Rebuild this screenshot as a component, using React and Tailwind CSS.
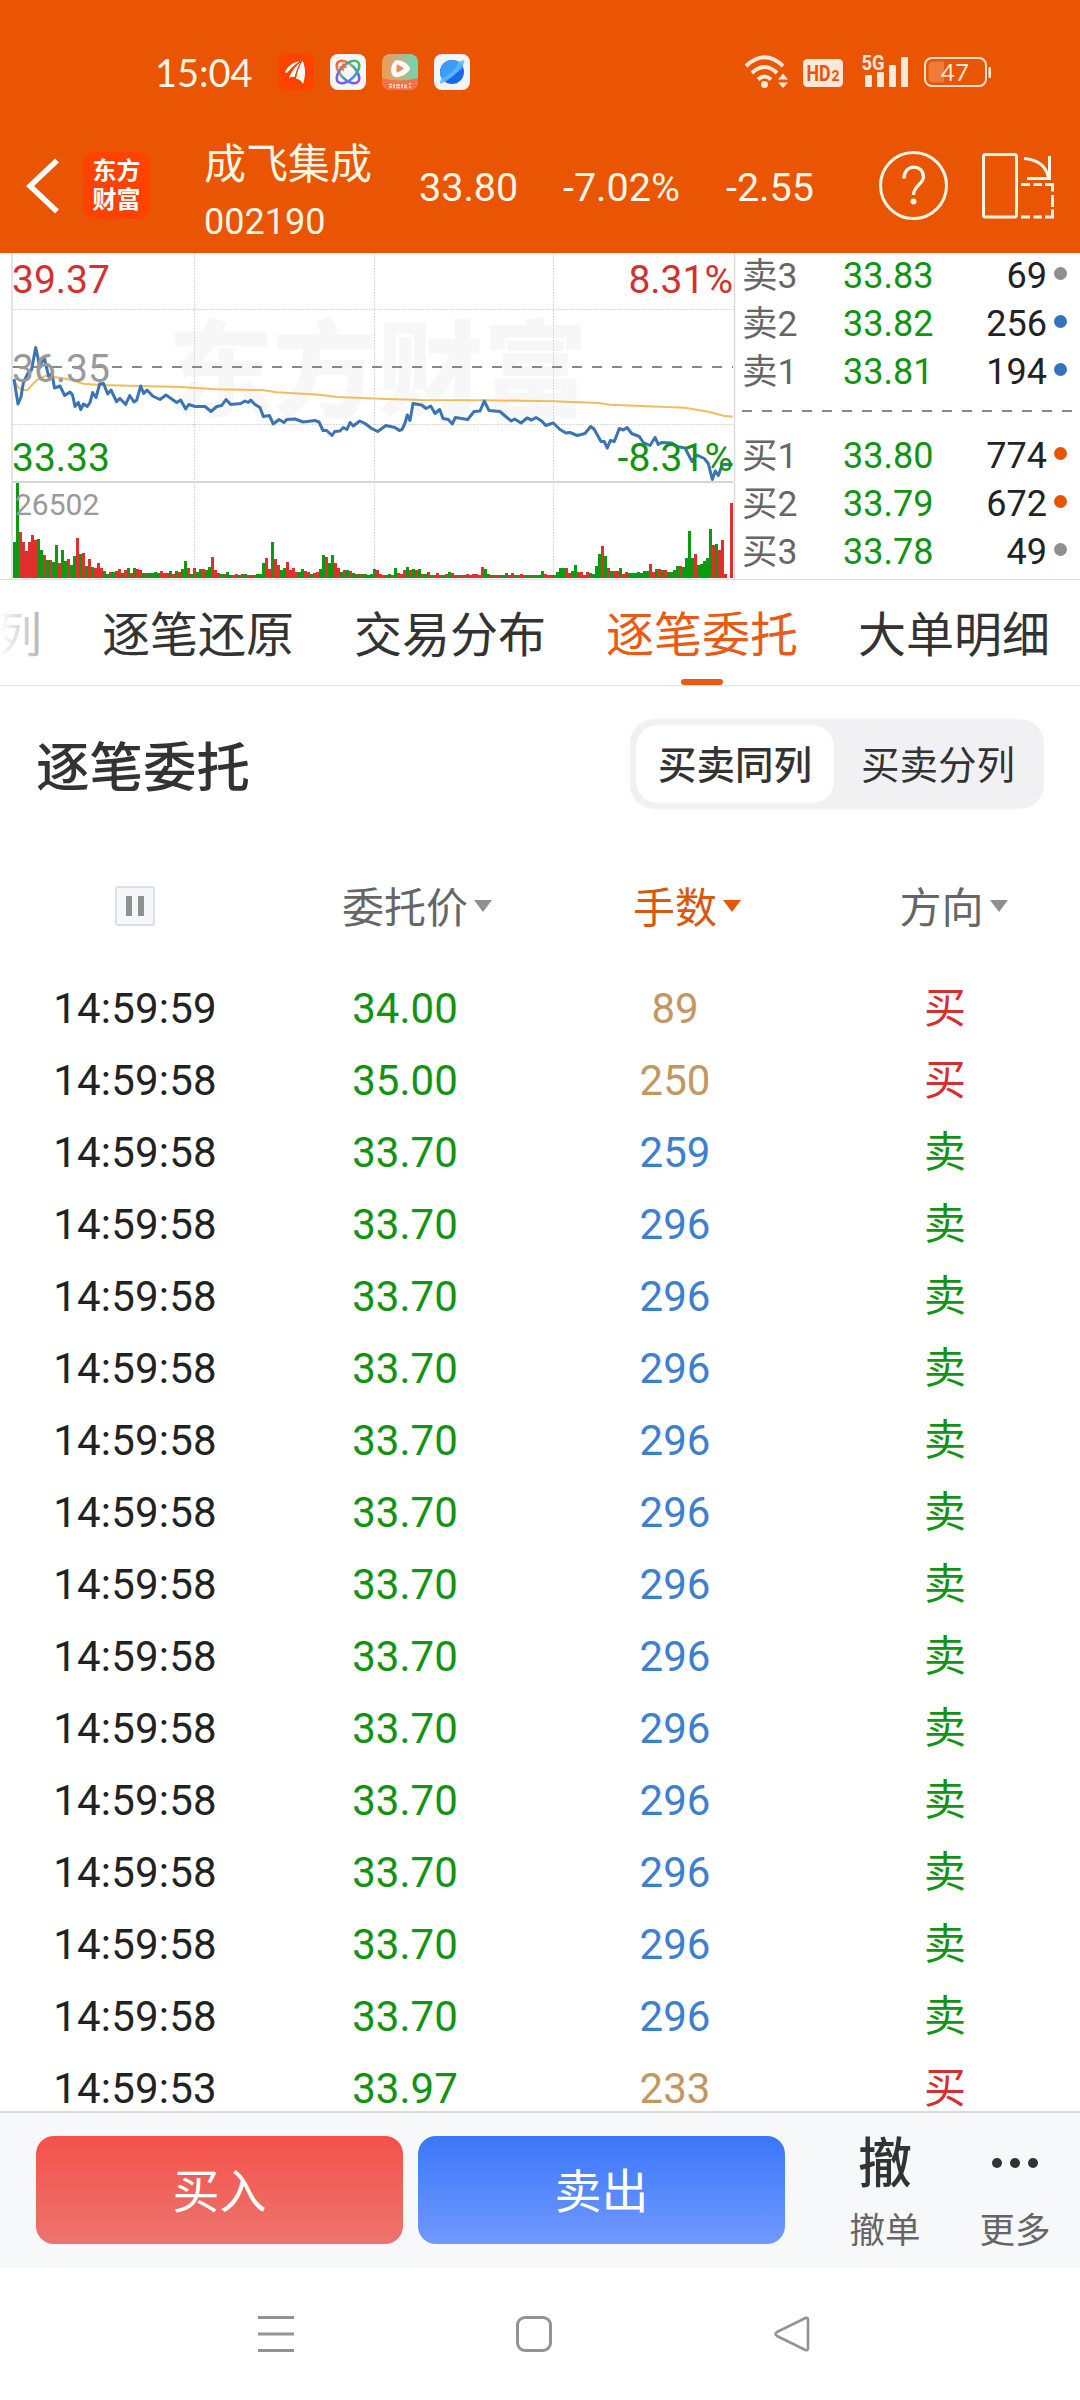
import React from 'react';

const PRICE_LINE =
  '14,379 18,404 21,397 23.3,383 28,373 31.5,370 35.7,347.5 39.5,365 44.5,358.5 48.5,376 52,374 54.5,388 60,386 64.7,395.5 70,392 72.5,395 75,406.5 78.3,402.5 80.7,409.5 83.5,404 87.3,406.5 90,402.5 92.7,392.5 96,397.5 99.7,384 103.5,383.5 107.7,394 111,390 116.5,401.5 120,398.5 125.7,404.5 129.7,395.5 134,402 136.7,400 140.7,386 143.7,393.5 147,390 152.7,396 160,399.5 166,395 171.7,399 176.7,402.5 180.7,400 185.7,409 188.7,404.5 195,406.5 205,406.5 211,411.5 216.7,406.5 221.7,405.5 226,399.5 230.7,404.5 240.7,403.5 245,401 248.3,402.5 250.7,400 255,404.5 260,407.5 263.3,416.5 269.3,415.5 273.3,424 279,419.5 284,422.5 286.7,419.5 295,419 303.3,422 315,420.5 319,422 323,430.5 326.7,430.5 332,435.5 334.7,431.5 340,431 343.3,427.5 347,429.5 350,422.5 353.3,426 359.7,421 365,423.5 371.7,428.5 377.7,431.5 386,425.5 395,427.5 399.3,430.5 402,429.5 404.7,424 407.3,415 410,420.5 413,403.5 421.7,405 426,408.5 430.7,406 435,413.5 439.7,409.5 443,418.5 448.3,419.5 452.3,424 455.3,417.5 467.7,419.5 474,411.5 480,411 484.3,401 489,410.5 500,411.5 505.7,416.5 511.3,421 514.7,419 521,423 527,418 531.7,420 536,417.5 541.7,421 545.7,425.5 553.3,423 560,429.5 566,433 570,432.5 577.3,435.5 585,433.5 590.7,426.5 594,429 597.7,435.5 601,441.5 604.3,441.5 607.3,448 610.3,440.5 614.3,441.5 619.3,428.5 623.3,430 627,427.5 631.7,433.5 639.3,436.5 643.3,442.5 650,445.5 655,437.5 658.3,444.5 661.7,442.5 671.7,443 676.7,446.5 685,448 692,461.5 696.7,455 704.3,458.5 708.3,463.5 712.3,479.5 715.3,471 718.3,475.5 722.3,464.5 732.7,464.5';

const AVERAGE_LINE =
  '14,380 18,387 21.7,390 27.3,390 36.7,380 45,376 60,377.7 71.7,380 83.3,383.7 100,385 140,386 180,387 216.7,389.3 261.7,390 276.7,392.3 320,394.7 336.7,397 380,398.7 420,400 486.7,400.3 553.3,401.3 598.3,403 610,404.7 685,407.7 710,412 723.3,415.7 732.7,416.7';

// One entry per minute: direction (r = up, g = down) and bar height
const VOLUMES = (
  'g36 g95 r46 r36 r27 r36 r43 r38 g39 g28 r23 g18 r18 g16 g33 r15 g28 g17 r19 g13 g22 r40 g24 r25 g12 r19 g11 r10 r15 r10 ' +
  'g7 g4 r6 g6 r7 r9 g5 r8 g10 r5 g10 r9 r8 g5 r5 g5 g5 g6 g5 r7 r5 r5 g7 r4 g7 r6 g9 g17 r10 g4 ' +
  'r10 g6 g9 r9 g8 g11 r21 r8 r5 g4 r4 g6 g3 r3 r4 g3 r4 g4 r3 r3 g3 g4 g4 g15 r20 r9 g36 r19 r13 g8 ' +
  'g10 r16 r8 r10 r6 g6 g9 r7 r6 g4 r5 r6 g9 g23 r21 g15 g23 r15 r10 g6 r8 g8 r7 g5 r4 g4 r4 g4 g3 ' +
  'g4 g9 r8 r4 r3 g3 g4 r3 g10 r5 r4 r8 g11 r8 g9 r8 g9 r4 g4 r6 g3 r3 r5 r3 g3 r4 g6 r5 r3 g3 ' +
  'r3 g3 r4 r3 r4 r4 r3 r11 g9 g4 r3 g3 r3 r3 g3 g5 r3 r5 g3 r3 r4 r3 g3 r3 g3 g3 g3 g7 r4 r3 ' +
  'r3 g3 g6 g10 g10 r10 r5 g7 g13 r6 r6 r3 r6 g5 g4 g12 g24 r32 g22 r10 g7 r7 r7 g10 r4 r6 g5 g5 g5 g6 ' +
  'g5 g7 g7 r14 r6 g9 r9 g8 r8 g6 g6 g8 g12 r12 g11 g20 g47 g20 r24 g13 g14 g17 g20 g49 r33 g34 r28 r38 r4 r0 r75'
).split(' ');

const ASKS = [
  { label: '卖3', price: '33.83', volume: '69', dot: 'bg-[#8e8e93]' },
  { label: '卖2', price: '33.82', volume: '256', dot: 'bg-[#3273c0]' },
  { label: '卖1', price: '33.81', volume: '194', dot: 'bg-[#3273c0]' },
];

const BIDS = [
  { label: '买1', price: '33.80', volume: '774', dot: 'bg-[#ea5504]' },
  { label: '买2', price: '33.79', volume: '672', dot: 'bg-[#ea5504]' },
  { label: '买3', price: '33.78', volume: '49', dot: 'bg-[#8e8e93]' },
];

const TABS = ['逐笔还原', '交易分布', '逐笔委托', '大单明细'];

const ORDERS = [
  { time: '14:59:59', price: '34.00', lots: 89, side: '买' },
  { time: '14:59:58', price: '35.00', lots: 250, side: '买' },
  { time: '14:59:58', price: '33.70', lots: 259, side: '卖' },
  ...Array.from({ length: 12 }, () => ({
    time: '14:59:58',
    price: '33.70',
    lots: 296,
    side: '卖',
  })),
  { time: '14:59:53', price: '33.97', lots: 233, side: '买' },
];

function AppIcons() {
  return (
    <div className="flex gap-4">
      <svg className="h-9 w-9" viewBox="0 0 36 36">
        <rect width="36" height="36" rx="8" fill="#ff4200" />
        <g fill="#fff">
          <path d="M7 18.500C9 12 15 8.500 22 7C17 11 12.500 14 9.500 18.500Z" />
          <path d="M11 24C13 18 18 12 23 7.500C20.500 13 18.500 18 16.500 23C14.500 22.500 13 23 11 24Z" />
          <path d="M18 24.500C19 18 21.500 12 24.500 6.500C27.500 13 28 22 25 30C23.500 27 21 25 18 24.500Z" />
        </g>
        <path d="M23.500 7C20 13 18 18 17.300 25M22.500 7.500C16 12 13 15 10.500 20" stroke="#ff4200" strokeWidth="1" fill="none" />
      </svg>
      <svg className="h-9 w-9" viewBox="0 0 36 36">
        <defs>
          <linearGradient id="knot" x1="0" y1="0" x2="1" y2="0">
            <stop offset="0" stopColor="#f2603c" />
            <stop offset="0.3" stopColor="#e8a23a" />
            <stop offset="0.5" stopColor="#35b58a" />
            <stop offset="0.75" stopColor="#3a7bf0" />
            <stop offset="1" stopColor="#a24be0" />
          </linearGradient>
          <linearGradient id="knotB" x1="0" y1="0" x2="1" y2="0">
            <stop offset="0" stopColor="#8b55e8" />
            <stop offset="0.45" stopColor="#4a8cf0" />
            <stop offset="1" stopColor="#48c04c" />
          </linearGradient>
        </defs>
        <rect width="36" height="36" rx="8" fill="#f6f5f8" />
        <g fill="none" strokeWidth="2.600">
          <ellipse cx="18" cy="18" rx="14" ry="7.500" transform="rotate(45 18 18)" stroke="url(#knot)" />
          <ellipse cx="18" cy="18" rx="14" ry="7.500" transform="rotate(-45 18 18)" stroke="url(#knotB)" />
        </g>
        <path d="M13 8l1.300 3.700L18 13l-3.700 1.300L13 18l-1.300-3.700L8 13l3.700-1.300z" fill="#f0703c" />
      </svg>
      <svg className="h-9 w-9" viewBox="0 0 36 36">
        <defs>
          <linearGradient id="video" x1="0" y1="0.400" x2="1" y2="0.300">
            <stop offset="0" stopColor="#f09a58" />
            <stop offset="0.55" stopColor="#b8b487" />
            <stop offset="1" stopColor="#62dcb8" />
          </linearGradient>
          <clipPath id="videoClip">
            <rect width="36" height="36" rx="8" />
          </clipPath>
        </defs>
        <g clipPath="url(#videoClip)">
          <rect width="36" height="36" fill="url(#video)" />
          <path d="M0 24Q18 29 36 24V36H0Z" fill="#f4714a" />
        </g>
        <path d="M12 8C15 3 28 10 28 14.500C28 19 15 26 11 22C8 18 9 11 12 8Z" fill="#fff" />
        <path d="M15.500 11.500L20.500 14.500L15.500 17.500Z" fill="#f08a50" stroke="#f08a50" strokeWidth="2" strokeLinejoin="round" />
        <path d="M7 30.500h3M7 33h3M12 30v4M14 31h4M14 33.500h4M20 30v4M22 31.500h3M22 33.500h3M27 30.500l2-1.500M27 33h2" stroke="#ffe3cf" strokeWidth="1.500" />
      </svg>
      <svg className="h-9 w-9" viewBox="0 0 36 36">
        <rect width="36" height="36" rx="8" fill="#f4f4f8" />
        <circle cx="18" cy="18" r="12" fill="#1769ef" />
        <path d="M6 17C7 10 12 6 18 6C24 6 27.500 8 29 13C25 18 16 25 9.500 26.500C7 24 6 20.500 6 17Z" fill="#3c9cf8" />
        <path d="M25 8C29 5.500 31 6 30.200 8.500C28 15 14 27.500 7.500 29.500C5 30.200 5.500 27 8.500 23.500C15 22 22 15 25 8Z" fill="#5db7fb" opacity="0.85" />
      </svg>
    </div>
  );
}

function StatusIcons() {
  return (
    <svg className="h-10 w-[252px]" viewBox="742 52 252 40">
      <g fill="none" stroke="#ffe8d8" strokeWidth="4">
        <path d="M746 66Q764.500 48.500 783 66" />
        <path d="M752 73Q764.500 61 777 73" />
        <path d="M758 79.500Q764.500 73.500 771 79.500" />
      </g>
      <circle cx="764.500" cy="84.500" r="3.500" fill="#ffe8d8" />
      <path d="M783 73.500l5 6h-10zM783 88l5-5.500h-10z" fill="#ffe8d8" />
      <rect x="803" y="59" width="40" height="28" rx="4.500" fill="#ffe8d8" />
      <text x="806.500" y="81" fontSize="21.500" textLength="24" lengthAdjust="spacingAndGlyphs" className="font-bold" fill="#e95503">HD</text>
      <text x="831.500" y="81" fontSize="14" className="font-bold" fill="#e95503">2</text>
      <text x="861.500" y="70" fontSize="20" textLength="23" lengthAdjust="spacingAndGlyphs" className="font-bold" fill="#ffe8d8">5G</text>
      <g fill="#ffe8d8">
        <rect x="865" y="75" width="7" height="12" rx="1" />
        <rect x="877" y="72" width="7" height="15" rx="1" />
        <rect x="889" y="65" width="7" height="22" rx="1" />
        <rect x="901" y="57" width="7" height="30" rx="1" />
        <rect x="988.500" y="67" width="2.500" height="11" rx="1" />
      </g>
      <rect x="925" y="58" width="61" height="28" rx="7" fill="none" stroke="#ffe0cb" strokeWidth="2" />
      <path d="M933 61.500h11v21h-11a4.500 4.500 0 0 1-4.500-4.500v-12a4.500 4.500 0 0 1 4.500-4.500z" fill="#ef7a3a" />
      <text x="941" y="81" fontSize="24" fill="#ffe8d8" className="font-['Lato']">47</text>
    </svg>
  );
}

function StatusBar() {
  return (
    <div className="flex h-[104px] items-center justify-between pt-10 pr-[86px] pb-0 pl-[155px]">
      <div className="-mt-10 flex items-center pt-10">
        <span className="w-[123px] font-['Lato'] text-[38px] leading-[64px] text-[#fff6ea]">15:04</span>
        <AppIcons />
      </div>
      <StatusIcons />
    </div>
  );
}

function StockHeader() {
  return (
    <header className="flex h-[149px] items-center pt-[14px] pl-6 text-[39.500px] text-[#fff6e6]">
      <svg className="h-16 w-9 shrink-0" viewBox="0 0 36 64">
        <path d="M33 6.500L6 32L33 57.500" fill="none" stroke="#fff" strokeWidth="5.500" />
      </svg>
      <div className="ml-[23px] flex h-[67px] w-[67px] shrink-0 flex-col items-center justify-center rounded-xl bg-[#ff4200] text-2xl leading-[29px] font-bold text-white">
        <span>东方</span>
        <span>财富</span>
      </div>
      <div className="ml-[54px] w-[215px] shrink-0 pt-[15px] leading-[56px]">
        <h1 className="text-[42px]">成飞集成</h1>
        <p className="pt-px text-[36px]">002190</p>
      </div>
      <span className="w-[144px] shrink-0 pt-1">33.80</span>
      <span className="w-[163px] shrink-0 pt-1">-7.02%</span>
      <span className="w-[152px] shrink-0 pt-1">-2.55</span>
      <svg className="h-[71px] w-[71px] shrink-0" viewBox="0 0 71 71">
        <circle cx="35.500" cy="35.500" r="33" fill="none" stroke="#fff6e6" strokeWidth="3" />
        <path d="M26 28.500C26 13 45.500 14 45.500 27C45.500 34 35.500 35.500 35.500 45" fill="none" stroke="#fff6e6" strokeWidth="3.300" />
        <circle cx="35.500" cy="51.500" r="3" fill="#fff6e6" />
      </svg>
      <svg className="ml-[31px] h-[70px] w-[76px] shrink-0" viewBox="980 150 76 70" fill="none" stroke="#fff6e6" strokeWidth="3">
        <rect x="983.500" y="153.500" width="33" height="62.500" rx="2" />
        <path d="M1024 157.500Q1045 159 1048.500 177" />
        <path d="M1049.500 155v22.500h-22.500" />
        <path d="M1021 183.500h9M1033.500 183.500h8.500M1045 183.500h7.500v7M1052.500 194v12M1052.500 208.500v7.500h-7.500M1042 216h-8.500M1030 216h-9" />
      </svg>
    </header>
  );
}

function MinuteChart() {
  return (
    <svg className="h-[327px] w-[738px] shrink-0" viewBox="0 253 738 327">
      <text x="168" y="408" fontSize="105" className="font-black" fill="#f7f7f7">东方财富</text>
      <g stroke="#cfcfcf" strokeDasharray="1.500 1.500">
        <path d="M194.500 253V578M374.500 253V578M553.500 253V578" />
        <path d="M12 309.500H733M12 424.500H733" />
      </g>
      <path d="M12 367H733" stroke="#888" strokeWidth="2" strokeDasharray="10 10" />
      <path d="M12 482H733" stroke="#d6d6d6" strokeWidth="2" />
      <path d="M12 253V579M734.500 253V579" stroke="#dcdcdc" strokeWidth="1.500" />
      <polyline points={AVERAGE_LINE} fill="none" stroke="#f0bd5c" strokeWidth="2" />
      <polyline points={PRICE_LINE} fill="none" stroke="#3a74b5" strokeWidth="3" strokeLinejoin="round" />
      <g shapeRendering="crispEdges">
        {VOLUMES.map((item, i) => {
          const height = Number(item.slice(1));
          return (
            <rect
              key={i}
              x={13 + i * 3}
              y={578 - height}
              width="3"
              height={height}
              fill={item[0] === 'r' ? '#e0302d' : '#0c9a10'}
            />
          );
        })}
      </g>
      <g fontSize="39">
        <text x="12" y="292.500" fill="#d3302f">39.37</text>
        <text x="12" y="381.500" fill="#999">36.35</text>
        <text x="12" y="470.500" fill="#129312">33.33</text>
        <text x="733" y="292.500" textAnchor="end" fill="#d3302f">8.31%</text>
        <text x="733" y="470.500" textAnchor="end" fill="#129312">-8.31%</text>
      </g>
      <text x="15" y="514.500" fontSize="30" fill="#999">26502</text>
    </svg>
  );
}

function QuoteRow({ label, price, volume, dot }) {
  return (
    <div className="flex h-12 items-center">
      <span className="w-[101px] pt-0.5 text-[35.5px] text-[#666]">{label}</span>
      <span className="flex-1 pt-0.5 text-[#129312]">{price}</span>
      <span className="pt-0.5 text-[#222]">{volume}</span>
      <i className={`mb-1 ml-[7px] h-[13px] w-[13px] rounded-full ${dot}`} />
    </div>
  );
}

function OrderBook() {
  return (
    <div className="flex-1 pt-px pr-[13px] pl-1 text-[36px] leading-[48px]">
      <div className="-mt-[3px]">
        {ASKS.map((row) => (
          <QuoteRow key={row.label} {...row} />
        ))}
      </div>
      <svg className="-mr-3 h-9 w-[334px]" viewBox="0 0 334 36">
        <path d="M0 16H331" stroke="#888" strokeWidth="2" strokeDasharray="10 10" />
      </svg>
      {BIDS.map((row) => (
        <QuoteRow key={row.label} {...row} />
      ))}
    </div>
  );
}

function Tabs() {
  return (
    <nav className="relative flex h-[107px] justify-end gap-[60px] overflow-hidden border-y border-[#e2e2e2] pr-[30px] text-[48px] leading-[112px] whitespace-nowrap text-[#333]">
      <span>列</span>
      {TABS.map((tab) => {
        const active = tab === '逐笔委托';
        return (
          <span key={tab} className={active ? 'relative text-[#ea5a14]' : ''}>
            {tab}
            {active && (
              <i className="absolute top-[99px] left-1/2 h-1.5 w-[42px] -translate-x-1/2 rounded-[3px] bg-[#ea5a14]" />
            )}
          </span>
        );
      })}
      <div className="absolute inset-y-0 left-0 w-[110px] bg-linear-to-r from-white to-transparent" />
    </nav>
  );
}

function SectionTitle() {
  return (
    <div className="flex h-[156px] items-center justify-between pr-9 pl-9">
      <h2 className="pt-[10px] text-[53.500px] font-medium text-[#333]">逐笔委托</h2>
      <div className="flex h-[90px] w-[414px] rounded-3xl bg-[#f1f1f4] p-1.5 text-[38.500px] leading-[82px] text-[#333]">
        <span className="h-[78px] w-[198px] rounded-[22px] bg-white text-center font-medium">买卖同列</span>
        <span className="flex-1 pl-1 text-center">买卖分列</span>
      </div>
    </div>
  );
}

function Caret({ className }) {
  return (
    <svg className={`mb-1 ml-1.5 h-3 w-[18px] ${className}`} viewBox="0 0 18 12">
      <path d="M0 0H18L9 12Z" fill="currentColor" />
    </svg>
  );
}

function OrderTable() {
  return (
    <section className="h-[1269px] overflow-hidden text-[42px]">
      <div className="grid h-[130px] grid-cols-4 items-center pt-0.5 text-[#666]">
        <div className="flex justify-center">
          <div className="-mt-1 flex h-10 w-10 items-center justify-center gap-1.5 rounded-[3px] border-2 border-[#dcdfe5] bg-[#f6f7fa]">
            <i className="h-5 w-[6px] bg-[#909090]" />
            <i className="h-5 w-[6px] bg-[#909090]" />
          </div>
        </div>
        <div className="flex items-center justify-center pl-6">
          委托价
          <Caret className="text-[#8e8e93]" />
        </div>
        <div className="flex items-center justify-center pl-6 text-[#d9570f]">
          手数
          <Caret className="text-[#ea5504]" />
        </div>
        <div className="flex items-center justify-center pl-[17px]">
          方向
          <Caret className="text-[#8e8e93]" />
        </div>
      </div>
      {ORDERS.map((order, i) => (
        <div key={i} className="grid h-[72px] grid-cols-4 text-center leading-[73px]">
          <span className="tracking-[0.2px] text-[#222]">{order.time}</span>
          <span className="text-[#129312]">{order.price}</span>
          <span className={order.lots > 250 ? 'text-[#3d7fd0]' : 'text-[#c29763]'}>{order.lots}</span>
          <span className={order.side === '买' ? 'text-[#d3302f]' : 'text-[#129312]'}>{order.side}</span>
        </div>
      ))}
    </section>
  );
}

function TradeBar() {
  return (
    <footer className="flex h-[157px] border-t-2 border-[#d8dadc] bg-[#f6f8fa] pt-[23px] pl-9">
      <button className="h-[108px] w-[367px] rounded-[18px] bg-linear-to-b from-[#f4504a] to-[#eb746d] pt-1 text-[47px] text-white">
        买入
      </button>
      <button className="ml-[15px] h-[108px] w-[367px] rounded-[18px] bg-linear-to-b from-[#3b76f9] to-[#6f99fe] pt-1 text-[47px] text-white">
        卖出
      </button>
      <div className="ml-[35px] flex w-[130px] flex-col items-center">
        <span className="h-[70px] text-[54px] leading-[57px] font-medium text-[#333]">撤</span>
        <span className="text-[35.500px] leading-[50px] text-[#666]">撤单</span>
      </div>
      <div className="flex w-[130px] flex-col items-center">
        <div className="flex h-[70px] gap-2 pt-[22px]">
          <i className="h-2.5 w-2.5 rounded-full bg-[#333]" />
          <i className="h-2.5 w-2.5 rounded-full bg-[#333]" />
          <i className="h-2.5 w-2.5 rounded-full bg-[#333]" />
        </div>
        <span className="text-[35.500px] leading-[50px] text-[#666]">更多</span>
      </div>
    </footer>
  );
}

function SystemNav() {
  return (
    <div className="flex h-[132px] items-center justify-center gap-[218px] pr-[12px]">
      <svg className="h-10 w-10" viewBox="0 0 40 40">
        <path d="M2 3.500H38M2 20H38M2 36.500H38" stroke="#939393" strokeWidth="3" />
      </svg>
      <svg className="h-10 w-10" viewBox="0 0 40 40">
        <rect x="3.500" y="3.500" width="33" height="33" rx="7.500" fill="none" stroke="#939393" strokeWidth="3" />
      </svg>
      <svg className="h-10 w-10" viewBox="0 0 40 40">
        <path d="M5 18L33.500 4Q36 3 36 6V34Q36 37 33.500 36L5 22Q2 20 5 18Z" fill="none" stroke="#939393" strokeWidth="2.600" />
      </svg>
    </div>
  );
}

export default function App() {
  return (
    <div className="h-[2400px] w-[1080px] overflow-hidden bg-white font-['Roboto','Noto_Sans_CJK_SC',sans-serif]">
      <div className="bg-[#e95503]">
        <StatusBar />
        <StockHeader />
      </div>
      <div className="flex h-[326px]">
        <MinuteChart />
        <OrderBook />
      </div>
      <Tabs />
      <SectionTitle />
      <OrderTable />
      <TradeBar />
      <SystemNav />
    </div>
  );
}
